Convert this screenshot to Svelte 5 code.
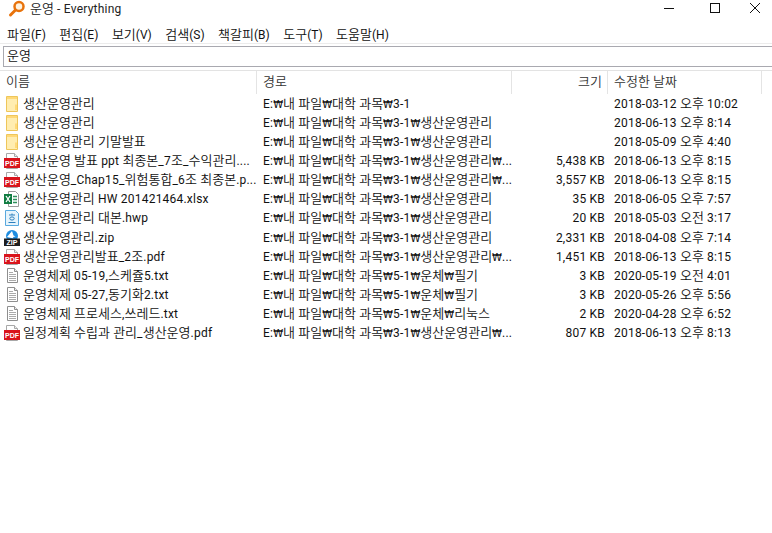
<script>
	const menus = ['파일(F)', '편집(E)', '보기(V)', '검색(S)', '책갈피(B)', '도구(T)', '도움말(H)'];
	const base = 'E:₩내 파일₩대학 과목₩';
	const rows = [
		{ icon: 'folder', name: '생산운영관리', path: base + '3-1', size: '', date: '2018-03-12 오후 10:02' },
		{ icon: 'folder', name: '생산운영관리', path: base + '3-1₩생산운영관리', size: '', date: '2018-06-13 오후 8:14' },
		{ icon: 'folder', name: '생산운영관리 기말발표', path: base + '3-1₩생산운영관리', size: '', date: '2018-05-09 오후 4:40' },
		{ icon: 'pdf', name: '생산운영 발표 ppt 최종본_7조_수익관리....', path: base + '3-1₩생산운영관리₩...', size: '5,438 KB', date: '2018-06-13 오후 8:15' },
		{ icon: 'pdf', name: '생산운영_Chap15_위험통합_6조 최종본.p...', path: base + '3-1₩생산운영관리₩...', size: '3,557 KB', date: '2018-06-13 오후 8:15' },
		{ icon: 'xlsx', name: '생산운영관리 HW 201421464.xlsx', path: base + '3-1₩생산운영관리', size: '35 KB', date: '2018-06-05 오후 7:57' },
		{ icon: 'hwp', name: '생산운영관리 대본.hwp', path: base + '3-1₩생산운영관리', size: '20 KB', date: '2018-05-03 오전 3:17' },
		{ icon: 'zip', name: '생산운영관리.zip', path: base + '3-1₩생산운영관리', size: '2,331 KB', date: '2018-04-08 오후 7:14' },
		{ icon: 'pdf', name: '생산운영관리발표_2조.pdf', path: base + '3-1₩생산운영관리₩...', size: '1,451 KB', date: '2018-06-13 오후 8:15' },
		{ icon: 'txt', name: '운영체제 05-19,스케쥴5.txt', path: base + '5-1₩운체₩필기', size: '3 KB', date: '2020-05-19 오전 4:01' },
		{ icon: 'txt', name: '운영체제 05-27,동기화2.txt', path: base + '5-1₩운체₩필기', size: '3 KB', date: '2020-05-26 오후 5:56' },
		{ icon: 'txt', name: '운영체제 프로세스,쓰레드.txt', path: base + '5-1₩운체₩리눅스', size: '2 KB', date: '2020-04-28 오후 6:52' },
		{ icon: 'pdf', name: '일정계획 수립과 관리_생산운영.pdf', path: base + '3-1₩생산운영관리₩...', size: '807 KB', date: '2018-06-13 오후 8:13' }
	];

	// hangul runs are set a bit larger, the reference font has wider hangul than latin
	const runs = (text) => text.match(/[가-힣]+|₩|[^가-힣₩]+/g) ?? [];
	const runClass = (run) => (run === '₩' ? 'won' : /[가-힣]/.test(run) ? 'ko' : 'la');
</script>

{#snippet mixed(text)}
	{#each runs(text) as run}<span class={runClass(run)}>{run}</span>{/each}
{/snippet}

{#snippet sheet()}
	<path d="M2.500 .5h8l3 3v12h-11z" fill="#fff" stroke="#a8a8a8" />
	<path d="M10.500 .5v3h3" fill="#eee" stroke="#a8a8a8" />
{/snippet}

{#snippet fileIcon(kind)}
	<svg class="ficon" width="16" height="16" viewBox="0 0 16 16">
		{#if kind === 'folder'}
			<path d="M2.500 .5h11v15h-11z" fill="#ffedb0" stroke="#eec65a" />
			<path d="M3 1h10v2h-10z" fill="#ffd978" />
			<path d="M11 8.500v5.500h2v-5.500z" fill="#ffd978" />
		{:else if kind === 'pdf'}
			{@render sheet()}
			<rect x="0" y="5" width="16" height="10" fill="#d9141c" />
			<text class="badge" x="8" y="12.700" text-anchor="middle">PDF</text>
		{:else if kind === 'xlsx'}
			<path d="M4.500 .5h7l3 3v12h-10z" fill="#fff" stroke="#9a9a9a" />
			<path d="M9 5.500h4M9 8.500h4M9 11.500h4" stroke="#2f8f5b" stroke-width="1.300" />
			<rect x="0" y="3" width="8" height="10" fill="#107c41" />
			<path d="M2 5l4 6M6 5l-4 6" stroke="#fff" stroke-width="1.300" />
		{:else if kind === 'hwp'}
			<path d="M1.500 .5h10l3 3v12h-13z" fill="#e6f4fc" stroke="#58a8de" />
			<path d="M5 5h6M8 3.500v1.500M5.800 8.500a2.200 1.600 0 0 0 4.400 0a2.200 1.600 0 0 0-4.400 0M4.500 12.500h7" fill="none" stroke="#2b7fbd" />
		{:else if kind === 'zip'}
			<circle cx="8" cy="6" r="6" fill="#1f8de0" />
			<path d="M3 7l5-6l1.500 4.500l2 1l-2.500 .5l.5 1.500z" fill="#fff" />
			<rect x="0" y="8.500" width="16" height="7.500" fill="#1d1d1f" />
			<text class="badge" x="8" y="14.800" text-anchor="middle">ZIP</text>
		{:else}
			<path d="M3.500 .5h7l3 3v11h-10z" fill="#fff" stroke="#8f8f8f" />
			<path d="M10.500 .5v3h3" fill="#eee" stroke="#8f8f8f" />
			<path d="M5 4.500h4M5 6.500h7M5 8.500h7M5 10.500h7M5 12.500h7" stroke="#aaa" />
		{/if}
	</svg>
{/snippet}

<div class="window">
	<header class="titlebar">
		<svg class="logo" width="18" height="18" viewBox="0 0 18 18">
			<circle cx="11" cy="6.500" r="4.500" fill="#fff3e0" stroke="#e8730c" stroke-width="2.500" />
			<path d="M7.500 10l-5 5" stroke="#e8730c" stroke-width="3" stroke-linecap="round" />
		</svg>
		<span class="title">{@render mixed('운영 - Everything')}</span>
		<div class="winbtns">
			<svg width="46" height="18" viewBox="0 0 46 18"><path d="M18 8.500h10" stroke="#111" /></svg>
			<svg width="46" height="18" viewBox="0 0 46 18"><rect x="18.500" y="3.500" width="9" height="9" fill="none" stroke="#111" /></svg>
			<svg width="34" height="18" viewBox="6 0 34 18"><path d="M18 3l10 10M28 3l-10 10" stroke="#111" /></svg>
		</div>
	</header>

	<nav class="menubar">
		{#each menus as m}
			<span class="menu">{@render mixed(m)}</span>
		{/each}
	</nav>

	<div class="searchwrap">
		<div class="search">{@render mixed('운영')}</div>
	</div>

	<div class="list">
		<div class="row head">
			<span class="cell">{@render mixed('이름')}</span>
			<span class="cell">{@render mixed('경로')}</span>
			<span class="cell right">{@render mixed('크기')}</span>
			<span class="cell">{@render mixed('수정한 날짜')}</span>
		</div>
		{#each rows as r}
			<div class="row">
				<span class="cell name">{@render fileIcon(r.icon)}{@render mixed(r.name)}</span>
				<span class="cell">{@render mixed(r.path)}</span>
				<span class="cell right">{@render mixed(r.size)}</span>
				<span class="cell">{@render mixed(r.date)}</span>
			</div>
		{/each}
	</div>
</div>

<style>
	:global(body) {
		background: #fff;
		font-family: 'Roboto', 'Noto Sans CJK KR', sans-serif;
		font-size: 12px;
		color: #111;
	}

	.ko {
		font-family: 'Noto Sans CJK KR', sans-serif;
		font-size: 13px;
		font-weight: 350;
	}

	.won {
		font-family: 'DejaVu Sans', sans-serif;
		font-size: 10px;
	}

	.la {
		letter-spacing: 0.22px;
		white-space: pre;
	}

	.window {
		width: 772px;
		height: 533px;
		overflow: hidden;
	}

	.titlebar {
		height: 24px;
		display: flex;
		align-items: flex-start;
		line-height: 16px;
		padding-left: 8px;
	}

	.title {
		margin-left: 4px;
		color: #222;
	}

	.logo {
		flex: none;
	}

	.winbtns {
		margin-left: auto;
		display: flex;
	}

	.menubar {
		height: 19px;
		display: flex;
		align-items: center;
		gap: 13.500px;
		padding-left: 7px;
		margin-bottom: 2px;
		border-bottom: 1px solid #ececec;
	}

	.menu .la {
		letter-spacing: 0;
	}

	.searchwrap {
		padding: 0 0 3px 3px;
		border-bottom: 1px solid #e3e3e3;
	}

	.search {
		height: 19px;
		line-height: 16px;
		padding-left: 3px;
		border: 1px solid #a9a9b0;
		border-right: 0;
	}

	.row {
		display: grid;
		grid-template-columns: 257px 255px 96px 154px;
		align-items: baseline;
		height: 19.080px;
		line-height: 17px;
		white-space: nowrap;
	}

	.head {
		align-items: stretch;
		height: 23px;
		line-height: 19px;
		color: #333;
	}

	.head .cell {
		border-right: 1px solid #e4e4e4;
		padding-left: 6px;
	}

	.head .right {
		padding-right: 5px;
		padding-left: 0;
	}

	.cell {
		padding-left: 6px;
	}

	.name {
		padding-left: 4px;
	}

	.ficon {
		margin-right: 3px;
		vertical-align: -4px;
	}

	.right {
		text-align: right;
		padding-left: 0;
		padding-right: 3px;
	}

	.badge {
		font-family: 'Liberation Sans', sans-serif;
		font-size: 7px;
		font-weight: 700;
		fill: #fff;
	}
</style>
